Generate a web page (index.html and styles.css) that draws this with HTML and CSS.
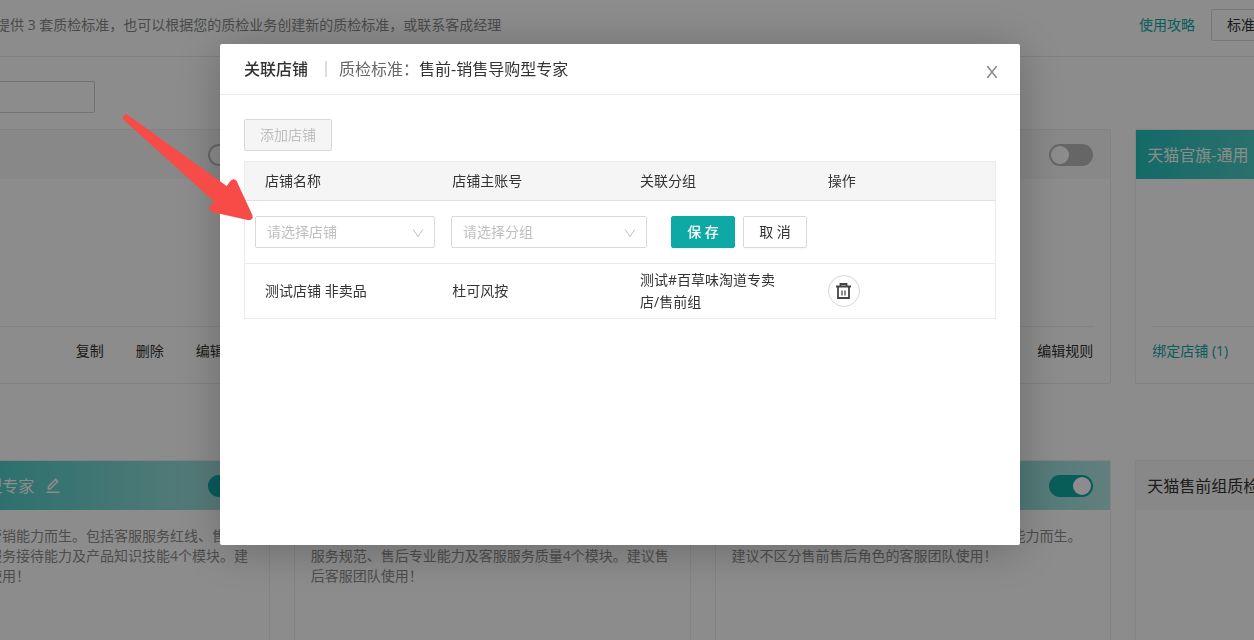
FILE: index.html
```html
<!DOCTYPE html>
<html lang="zh-CN">
<head>
<meta charset="utf-8">
<title>质检标准</title>
<link rel="stylesheet" href="styles.css">
</head>
<body>
<div class="page">
  <header class="topbar">
    <p class="topbar-note">提供 3 套质检标准，也可以根据您的质检业务创建新的质检标准，或联系客成经理</p>
    <div class="topbar-actions">
      <a class="link" href="#">使用攻略</a>
      <button class="btn" type="button">标准管理</button>
    </div>
  </header>
  <div class="filters"><input class="search" type="text" aria-label="搜索标准"></div>

  <main>
    <section class="cards">
      <article class="card">
        <div class="card-head"><input class="switch" type="checkbox" aria-label="启用"></div>
        <div class="card-body"></div>
        <div class="card-foot"><span class="foot-actions"><a href="#">复制</a><a href="#">删除</a><a href="#">编辑规则</a></span></div>
      </article>
      <article class="card">
        <div class="card-head"><input class="switch" type="checkbox" aria-label="启用"></div>
        <div class="card-body"></div>
        <div class="card-foot"></div>
      </article>
      <article class="card">
        <div class="card-head"><input class="switch" type="checkbox" aria-label="启用"></div>
        <div class="card-body"></div>
        <div class="card-foot"><span class="foot-actions"><a href="#">编辑规则</a></span></div>
      </article>
      <article class="card">
        <div class="card-head card-head-on"><h2 class="card-title">天猫官旗-通用</h2></div>
        <div class="card-body"></div>
        <div class="card-foot"><a class="link" href="#">绑定店铺 (1)</a></div>
      </article>
    </section>

    <section class="cards">
      <article class="card card-tall">
        <div class="card-head card-head-on">
          <h2 class="card-title">售前-销售导购型专家</h2>
          <svg class="pencil" viewBox="0 0 14 16" aria-hidden="true"><path d="M2.500 11V8.600L9.600 1.500l2 2-7.200 7.300zM.500 14.200h13" fill="none" stroke="currentColor" stroke-width="1.600"/></svg>
          <input class="switch" type="checkbox" checked aria-label="启用">
        </div>
        <p class="card-desc">专为提升售前的营销能力而生。包括客服服务红线、售前<br>服务规范、客户服务接待能力及产品知识技能4个模块。建<br>议售前客服团队使用！</p>
      </article>
      <article class="card card-tall">
        <div class="card-head card-head-on"><input class="switch" type="checkbox" checked aria-label="启用"></div>
        <p class="card-desc">专为提升售后服务能力而生。包括客服服务红线、售后<br>服务规范、售后专业能力及客服服务质量4个模块。建议售<br>后客服团队使用！</p>
      </article>
      <article class="card card-tall">
        <div class="card-head card-head-on"><input class="switch" type="checkbox" checked aria-label="启用"></div>
        <p class="card-desc">专为中小型店铺提升客服团队综合接待与服务能力而生。<br>建议不区分售前售后角色的客服团队使用！</p>
      </article>
      <article class="card card-tall">
        <div class="card-head"><h2 class="card-title">天猫售前组质检标准</h2></div>
      </article>
    </section>
  </main>
</div>

<div class="mask">
  <div class="modal" role="dialog" aria-modal="true" aria-labelledby="modal-title">
    <header class="modal-head">
      <h1 class="modal-title" id="modal-title">关联店铺</h1>
      <span class="divider"></span>
      <p class="modal-sub"><span class="muted">质检标准：</span>售前-销售导购型专家</p>
      <button class="close" type="button" aria-label="关闭">
        <svg viewBox="0 0 12 12" aria-hidden="true"><path d="M1.300 0 10.700 12M10.700 0 1.300 12" fill="none" stroke="currentColor" stroke-width="1.500"/></svg>
      </button>
    </header>
    <div class="modal-body">
      <button class="btn" type="button" disabled>添加店铺</button>
      <table class="shops">
        <thead>
          <tr><th>店铺名称</th><th>店铺主账号</th><th>关联分组</th><th>操作</th></tr>
        </thead>
        <tbody>
          <tr>
            <td class="edit-cell" colspan="4">
              <form class="edit-row">
                <span class="select select-shop">
                  <select aria-label="店铺"><option>请选择店铺</option></select>
                  <svg class="chevron" viewBox="0 0 12 10" aria-hidden="true"><path d="M1.200 1.500 6 8.500 10.800 1.500" fill="none" stroke="currentColor"/></svg>
                </span>
                <span class="select select-group">
                  <select aria-label="分组"><option>请选择分组</option></select>
                  <svg class="chevron" viewBox="0 0 12 10" aria-hidden="true"><path d="M1.200 1.500 6 8.500 10.800 1.500" fill="none" stroke="currentColor"/></svg>
                </span>
                <span class="edit-buttons">
                  <button class="btn btn-primary" type="button">保 存</button>
                  <button class="btn" type="button">取 消</button>
                </span>
              </form>
            </td>
          </tr>
          <tr>
            <td>测试店铺 非卖品</td>
            <td>杜可风按</td>
            <td>测试#百草味淘道专卖店/售前组</td>
            <td>
              <button class="trash" type="button" aria-label="删除">
                <svg viewBox="0 0 16 18" aria-hidden="true"><path d="M0 4.500h15M4.500 4V2h6v2M2 5v11h11V5" fill="none" stroke="currentColor" stroke-width="1.800"/><path d="M6 8.500v5M9 8.500v5" fill="none" stroke="currentColor" stroke-width="1.200"/></svg>
              </button>
            </td>
          </tr>
        </tbody>
      </table>
    </div>
  </div>
</div>

<svg class="pointer" viewBox="0 0 450 375" aria-hidden="true"><path d="M36 40 48 26 350 243 361 228Q371 218 380 228L427 330Q432 345 416 346L306 321Q293 315 300 304L313 290Z" fill="#f74b47"/></svg>
</body>
</html>
```
FILE: styles.css
```css
* {
  box-sizing: border-box;
}

body {
  margin: 0;
  font: 14px/20px "Open Sans", "Noto Sans CJK SC", sans-serif;
  color: #333;
  background: #fff;
}

h1, h2, p {
  margin: 0;
  font-weight: 400;
}

a {
  color: inherit;
  text-decoration: none;
}

button, input, select {
  font: inherit;
  color: inherit;
}

.link {
  color: #0fa9a5;
}

.btn {
  height: 32px;
  padding: 0 15px;
  color: #333;
  background: #fff;
  border: 1px solid #d9d9d9;
  border-radius: 2px;
  white-space: nowrap;
}

.btn:disabled {
  color: #bfbfbf;
  background: #f5f5f5;
}

.btn-primary {
  color: #fff;
  font-weight: 500;
  background: #0fa9a5;
  border-color: #0fa9a5;
}

/* Page behind the dialog */

.page {
  height: 100vh;
  overflow: hidden;
}

.topbar {
  display: flex;
  align-items: center;
  justify-content: space-between;
  height: 57px;
  padding-bottom: 6px;
  border-bottom: 1px solid #ebebeb;
}

.topbar-note {
  margin-left: -4px;
  color: #888;
  white-space: nowrap;
}

.topbar-actions {
  display: flex;
  align-items: center;
  gap: 16px;
  margin-right: -45px;
}

.filters {
  padding: 24px 0 16px;
  margin-left: -127px;
}

.search {
  display: block;
  width: 222px;
  height: 32px;
  border: 1px solid #d0d0d0;
  border-radius: 2px;
  background: #fff;
}

.cards {
  display: grid;
  grid-template-columns: repeat(4, 1fr);
  gap: 24px;
  margin: 0 -278px 76px -127px;
}

.card {
  display: flex;
  flex-direction: column;
  min-width: 0;
  height: 255px;
  border: 1px solid #ededed;
  border-radius: 2px;
}

.card-tall {
  height: 280px;
}

.card-head {
  display: flex;
  align-items: center;
  height: 49px;
  padding: 0 17px 0 11px;
  background: #f7f7f7;
}

.card-head-on {
  color: #fff;
  background: linear-gradient(90deg, #24c2bb, #b3e6e3);
}

.card-title {
  font-size: 16px;
  line-height: 24px;
  white-space: nowrap;
}

.pencil {
  width: 14px;
  height: 16px;
  margin-left: 12px;
}

.switch {
  position: relative;
  width: 44px;
  height: 22px;
  margin: 0 0 0 auto;
  appearance: none;
  background: #bbb;
  border-radius: 11px;
}

.switch::after {
  position: absolute;
  top: 2px;
  left: 2px;
  width: 18px;
  height: 18px;
  content: "";
  background: #fff;
  border-radius: 50%;
}

.switch:checked {
  background: #0fa9a5;
}

.switch:checked::after {
  right: 2px;
  left: auto;
}

.card-body {
  flex: 1;
}

.card-foot {
  display: flex;
  align-items: center;
  height: 57px;
  margin: 0 16px;
  padding-bottom: 8px;
  border-top: 1px solid #ededed;
}

.foot-actions {
  display: flex;
  gap: 32px;
  padding-right: 1px;
  margin-left: auto;
}

.card-desc {
  padding: 16px 0 0 16px;
  color: #8c8c8c;
  white-space: nowrap;
}

/* Dialog */

.mask {
  position: fixed;
  inset: 0;
  display: flex;
  align-items: flex-start;
  justify-content: center;
  padding: 44px 14px 0 0;
  background: rgba(0, 0, 0, 0.45);
}

.modal {
  width: 800px;
  min-height: 501px;
  background: #fff;
  border-radius: 2px;
  box-shadow: 0 4px 48px rgba(0, 0, 0, 0.25);
}

.modal-head {
  display: flex;
  align-items: center;
  height: 51px;
  padding: 0 22px 0 24px;
  border-bottom: 1px solid #ebebeb;
  font-size: 16px;
  line-height: 24px;
}

.modal-title {
  font-size: 16px;
  font-weight: 500;
  line-height: 24px;
}

.divider {
  width: 2px;
  height: 16px;
  margin: 0 12px 0 17px;
  background: #ddd;
}

.muted {
  color: #666;
}

.close {
  width: 12px;
  height: 12px;
  margin: 6px 0 0 auto;
  padding: 0;
  color: #888;
  background: none;
  border: 0;
}

.close svg {
  display: block;
}

.modal-body {
  padding: 24px;
}

.shops {
  width: 100%;
  margin-top: 10px;
  table-layout: fixed;
  border-collapse: collapse;
  border: 1px solid #ebebeb;
}

.shops th,
.shops td {
  padding: 5px 20px;
  font-weight: 400;
  line-height: 22px;
  text-align: left;
  border-bottom: 1px solid #ebebeb;
}

.shops th {
  height: 39px;
  background: #f5f5f5;
  border-bottom-color: #e0e0e0;
}

.shops .edit-cell {
  padding: 15px 10px;
}

.edit-row {
  display: flex;
  gap: 16px;
}

.select {
  position: relative;
}

.select-shop {
  width: 180px;
}

.select-group {
  width: 196px;
}

.select select {
  display: block;
  width: 100%;
  height: 32px;
  padding: 0 11px;
  color: #bfbfbf;
  appearance: none;
  background: #fff;
  border: 1px solid #d9d9d9;
  border-radius: 2px;
}

.chevron {
  position: absolute;
  top: 12px;
  right: 11px;
  width: 12px;
  height: 10px;
  color: #bfbfbf;
  pointer-events: none;
}

.edit-buttons {
  display: flex;
  gap: 8px;
  margin-left: 8px;
}

.edit-buttons .btn {
  width: 64px;
  box-shadow: 0 2px 0 rgba(0, 0, 0, 0.02);
}

.trash {
  display: flex;
  align-items: center;
  justify-content: center;
  width: 32px;
  height: 32px;
  padding: 0;
  color: #444;
  background: #fff;
  border: 1px solid #d9d9d9;
  border-radius: 50%;
}

.trash svg {
  width: 16px;
  height: 18px;
}

.pointer {
  position: absolute;
  top: 105px;
  left: 110px;
  width: 150px;
  height: 125px;
  pointer-events: none;
}
```
